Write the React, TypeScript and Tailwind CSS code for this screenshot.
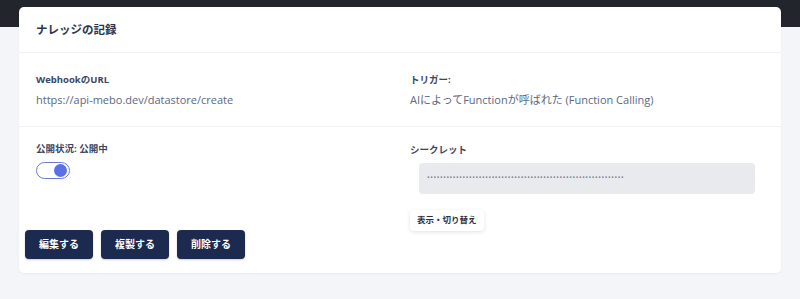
import { useState } from "react";

const font = { fontFamily: '"Open Sans", "Noto Sans CJK JP", sans-serif' };

export default function App() {
  const [isPublic, setIsPublic] = useState(true);
  const [showSecret, setShowSecret] = useState(false);

  const buttons = ["編集する", "複製する", "削除する"];

  return (
    <div className="min-h-[299px] w-[800px] bg-[#f4f5f9]" style={font}>
      <div className="h-[27px] bg-[#23252d]" />
      <div className="-mt-[20px] mx-[19px] rounded-[5px] bg-white shadow-[0_1px_3px_rgba(0,0,0,0.04)]">
        <div className="h-[46px] flex items-center px-[17px] border-b border-[#f0f1f4]">
          <h2 className="text-[11.5px] font-bold text-[#2c3654]">ナレッジの記録</h2>
        </div>

        <div className="grid grid-cols-2 h-[74px] border-b border-[#f0f1f4]">
          <div className="pl-[17px] pt-[20px]">
            <p className="text-[9.5px] font-bold text-[#3b4561] leading-[14px]">WebhookのURL</p>
            <p className="mt-[5px] text-[11px] text-[#5b6784] leading-[16px]">
              https://api-mebo.dev/datastore/create
            </p>
          </div>
          <div className="pl-[10px] pt-[20px]">
            <p className="text-[9.5px] font-bold text-[#3b4561] leading-[14px]">トリガー:</p>
            <p className="mt-[5px] text-[11px] text-[#5b6784] leading-[16px]">
              AIによってFunctionが呼ばれた (Function Calling)
            </p>
          </div>
        </div>

        <div className="grid grid-cols-2 h-[146px] pb-[14px]">
          <div className="flex flex-col">
            <div className="pl-[17px] pt-[15px]">
              <p className="text-[9.5px] font-bold text-[#3b4561] leading-[14px]">
                公開状況: {isPublic ? "公開中" : "非公開"}
              </p>
              <button
                type="button"
                onClick={() => setIsPublic(!isPublic)}
                className={`mt-[6px] flex items-center w-[34px] h-[17px] rounded-full border border-[#6a78d8] bg-white px-[2px] ${
                  isPublic ? "justify-end" : "justify-start"
                }`}
              >
                <span className="block w-[13px] h-[13px] rounded-full bg-[#5b70e6]" />
              </button>
            </div>
            <div className="mt-auto pl-[6px] flex gap-[8px]">
              {buttons.map((label) => (
                <button
                  key={label}
                  type="button"
                  className="w-[68px] h-[29px] rounded-[4px] bg-[#1b2a4e] text-white text-[10px] font-bold shadow-[0_1px_2px_rgba(0,0,0,0.2)]"
                >
                  {label}
                </button>
              ))}
            </div>
          </div>
          <div className="pl-[10px] pt-[16px]">
            <p className="text-[9.5px] font-bold text-[#3b4561] leading-[14px]">シークレット</p>
            <div className="mt-[6px] ml-[9px] w-[336px] h-[31px] rounded-[4px] bg-[#e8eaed] flex items-center px-[8px] overflow-hidden">
              <span className="text-[7px] tracking-[0.6px] text-[#7a8296] whitespace-nowrap">
                {showSecret ? "sk_live_8f2a4c9d1e7b3a6f5c0d2e9b4a7f1c3e" : "•".repeat(61)}
              </span>
            </div>
            <button
              type="button"
              onClick={() => setShowSecret(!showSecret)}
              className="mt-[16px] h-[21px] px-[7px] rounded-[4px] bg-white text-[8.5px] font-bold text-[#2c3140] shadow-[0_1px_4px_rgba(0,0,0,0.12)]"
            >
              表示・切り替え
            </button>
          </div>
        </div>
      </div>
    </div>
  );
}
